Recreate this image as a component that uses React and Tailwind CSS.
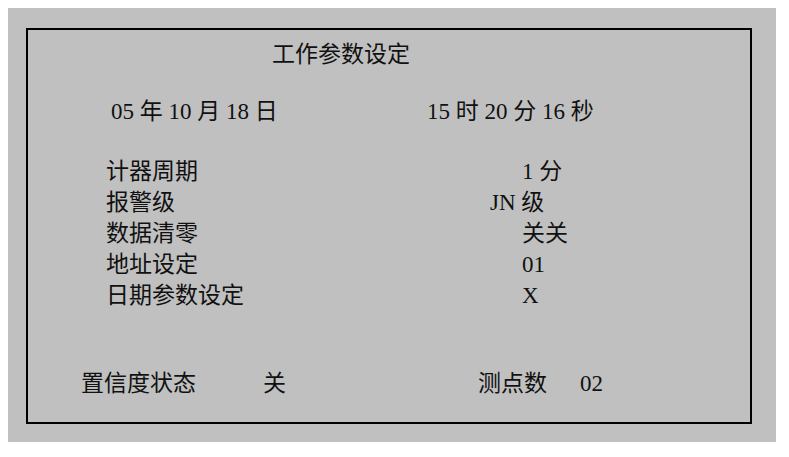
import React from "react";

const font = { fontFamily: '"Liberation Serif", "Noto Sans CJK SC", serif' };

const params = [
    { name: "计器周期", value: "1 分" },
    { name: "报警级", value: "JN 级", shift: true },
    { name: "数据清零", value: "关关" },
    { name: "地址设定", value: "01" },
    { name: "日期参数设定", value: "X" },
];

function ParamRow({ name, value, shift }) {
    return (
        <div className="flex h-[31px] items-center">
            <span className="w-[494px] pl-[78px]">{name}</span>
            <span className={shift ? "-ml-[32px]" : ""}>{value}</span>
        </div>
    );
}

export default function App() {
    return (
        <div className="w-[789px] h-[457px] bg-white pt-2 pl-2 overflow-hidden">
            <div className="w-[768px] h-[434px] bg-[#c0c0c0] pl-[18px] pt-[20px]">
                <div
                    className="w-[726px] h-[396px] border-2 border-black text-[23px] leading-[31px] text-[#111]"
                    style={font}
                >
                    <div className="mt-[9px] h-[31px] pl-[244px]">工作参数设定</div>

                    <div className="mt-[26px] flex h-[31px] items-center">
                        <span className="w-[399px] pl-[83px]">05 年 10 月 18 日</span>
                        <span>15 时 20 分 16 秒</span>
                    </div>

                    <div className="mt-[29px] flex flex-col">
                        {params.map((p) => (
                            <ParamRow key={p.name} {...p} />
                        ))}
                    </div>

                    <div className="mt-[57px] flex h-[31px] items-center">
                        <span className="w-[235px] pl-[53px]">置信度状态</span>
                        <span className="w-[215px]">关</span>
                        <span className="w-[102px]">测点数</span>
                        <span>02</span>
                    </div>
                </div>
            </div>
        </div>
    );
}
